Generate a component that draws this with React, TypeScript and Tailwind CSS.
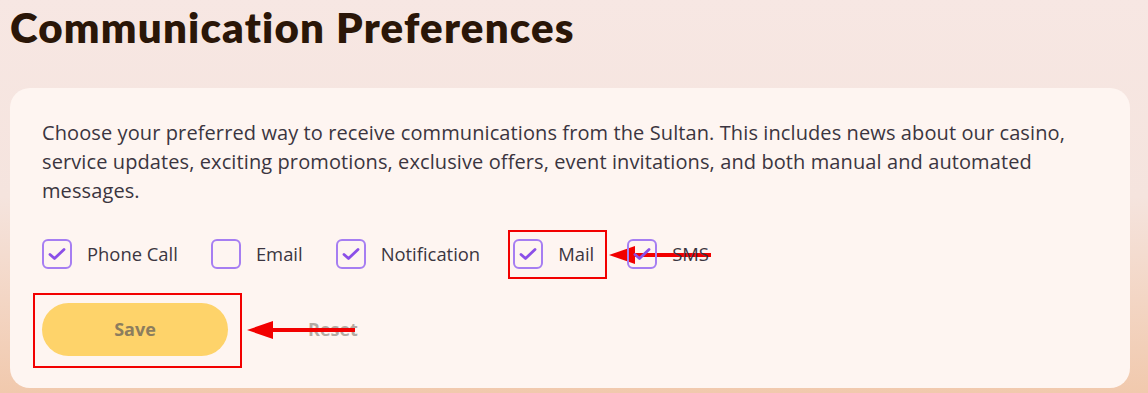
import { useState } from "react";

type Channel = { id: string; label: string; checked: boolean };

const initialChannels: Channel[] = [
    { id: "phone", label: "Phone Call", checked: true },
    { id: "email", label: "Email", checked: false },
    { id: "notification", label: "Notification", checked: true },
    { id: "mail", label: "Mail", checked: true },
    { id: "sms", label: "SMS", checked: true },
];

function CheckMark() {
    return (
        <svg width="18" height="14" viewBox="0 0 18 14" fill="none">
            <path
                d="M2 7.5L6.5 11.5L16 2.5"
                stroke="#8b4fe8"
                strokeWidth="2.8"
                strokeLinecap="round"
                strokeLinejoin="round"
            />
        </svg>
    );
}

// red annotation arrow pointing left
function Arrow({ length }: { length: number }) {
    return (
        <svg width={length} height="20" viewBox={`0 0 ${length} 20`} fill="none">
            <polygon points="0,10 26,1 26,19" fill="#f20000" />
            <rect x="24" y="8" width={length - 24} height="4" fill="#f20000" />
        </svg>
    );
}

export default function App() {
    const [channels, setChannels] = useState(initialChannels);

    function toggle(id: string) {
        setChannels((cs) => cs.map((c) => (c.id === id ? { ...c, checked: !c.checked } : c)));
    }

    return (
        <div
            className="w-[1148px] h-[393px] overflow-hidden bg-gradient-to-b from-[#f7e7e3] via-[#f5e4de] to-[#f1c9ad] px-[10px]"
            style={{ fontFamily: "'Open Sans', 'Noto Sans', sans-serif" }}
        >
            <h1
                className="text-[42px] leading-[54px] font-extrabold text-[#2a1608] tracking-[1.2px]"
                style={{ fontFamily: "Lato, sans-serif" }}
            >
                Communication Preferences
            </h1>

            <div className="mt-[34px] w-[1120px] h-[300px] rounded-[20px] bg-[#fef5f1] px-[32px] pt-[30px]">
                <p className="text-[20px] leading-[29px] text-[#3b3540] tracking-[0.1px] whitespace-nowrap">
                    Choose your preferred way to receive communications from the Sultan. This includes news about our casino,
                    <br />
                    service updates, exciting promotions, exclusive offers, event invitations, and both manual and automated
                    <br />
                    messages.
                </p>

                <div className="mt-[34px] flex items-center gap-[33px]">
                    {channels.map((c) => (
                        <label key={c.id} className="relative flex items-center gap-[15px] cursor-pointer">
                            <button
                                type="button"
                                onClick={() => toggle(c.id)}
                                className="w-[30px] h-[30px] rounded-[6px] border-2 border-[#a67ef2] flex items-center justify-center bg-transparent"
                            >
                                {c.checked && <CheckMark />}
                            </button>
                            <span className="text-[18.4px] leading-[26px] text-[#3b3540]">{c.label}</span>
                            {c.id === "mail" && (
                                <>
                                    <span className="pointer-events-none absolute -left-[5px] -top-[9px] w-[99px] h-[49px] border-2 border-[#f20000]" />
                                    <span className="pointer-events-none absolute left-[96px] top-[6px]">
                                        <Arrow length={102} />
                                    </span>
                                </>
                            )}
                        </label>
                    ))}
                </div>

                <div className="mt-[34px] flex items-center">
                    <div className="relative">
                        <button
                            type="button"
                            className="w-[186px] h-[53px] rounded-full bg-[#fed36a] text-[18px] font-bold text-[#8c7d5e]"
                        >
                            Save
                        </button>
                        <span className="pointer-events-none absolute -left-[9px] -top-[10px] w-[209px] h-[75px] border-2 border-[#f20000]" />
                        <span className="pointer-events-none absolute left-[205px] top-[17px]">
                            <Arrow length={108} />
                        </span>
                    </div>
                    <button type="button" className="ml-[80px] text-[18px] font-bold text-[#b3aaa3]">
                        Reset
                    </button>
                </div>
            </div>
        </div>
    );
}
